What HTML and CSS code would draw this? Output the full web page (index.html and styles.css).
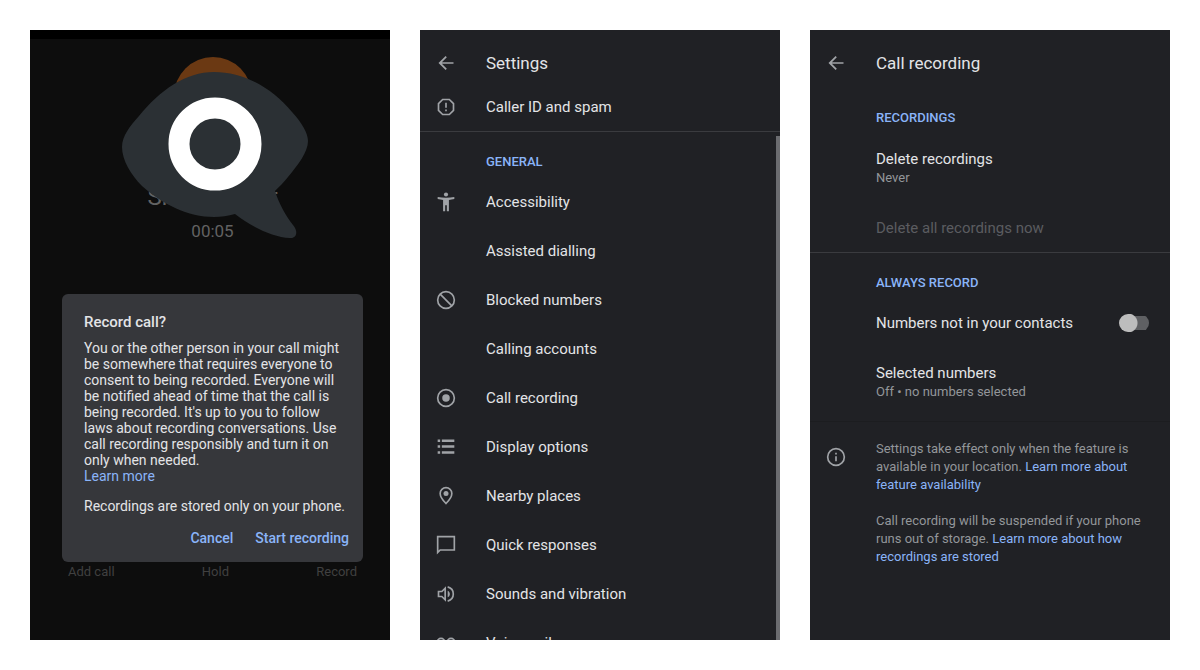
FILE: index.html
```html
<!DOCTYPE html>
<html lang="en">
<head>
  <meta charset="UTF-8">
  <meta name="viewport" content="width=device-width, initial-scale=1.0">
  <title>Call recording</title>
  <link rel="stylesheet" href="styles.css">
</head>
<body>
  <main class="screens">

    <!-- In-call screen with the consent dialog -->
    <section class="screen call">
      <div class="avatar"></div>
      <p class="caller">Sheila Miller</p>
      <p class="timer">00:05</p>
      <svg class="logo" viewBox="0 0 186 170" aria-hidden="true">
        <path fill="#2b3034" d="M0 77C0 66 8 56 17 46C38 20 64 2 92 2C122 2 150 18 170 42C180 53 186 63 186 71C186 82 176 95 166 107C162 112 157 117 153 121C157 134 164 146 171 155C177 162 174 169 168 168C150 167 130 157 113 144C106 146 99 147 92 147C66 147 40 134 20 116C9 105 0 90 0 77Z"/>
        <circle cx="93" cy="74" r="36" fill="#2b3034" stroke="#fff" stroke-width="21"/>
      </svg>
      <div class="dialog" role="dialog" aria-labelledby="dialog-title">
        <h2 id="dialog-title">Record call?</h2>
        <p>You or the other person in your call might be somewhere that requires everyone to consent to being recorded. Everyone will be notified ahead of time that the call is being recorded. It's up to you to follow laws about recording conversations. Use call recording responsibly and turn it on only when needed.</p>
        <a href="#">Learn more</a>
        <p class="stored">Recordings are stored only on your phone.</p>
        <div class="actions">
          <button type="button">Cancel</button>
          <button type="button">Start recording</button>
        </div>
      </div>
      <div class="call-buttons">
        <button type="button">Add call</button>
        <button type="button">Hold</button>
        <button type="button">Record</button>
      </div>
    </section>

    <!-- Settings list -->
    <section class="screen">
      <header class="app-bar">
        <button type="button" class="back" aria-label="Back">
          <svg class="icon" viewBox="0 0 24 24"><path d="M21 11H7l6-6-1.500-1.500L3 12l8.500 8.500L13 19l-6-6h14z"/></svg>
        </button>
        <h1>Settings</h1>
      </header>
      <a class="row" href="#">
        <svg class="icon line" viewBox="0 0 24 24"><path d="M8 3h8l5 5v8l-5 5H8l-5-5V8zM12 7v6M12 15v2"/></svg>
        Caller ID and spam
      </a>
      <div class="list">
        <h2 class="heading">General</h2>
        <a class="row" href="#">
          <svg class="icon" viewBox="0 0 24 24"><circle cx="12" cy="3" r="2.5"/><path d="M22 6v2.5c-2.500.5-4.500.8-6.500 1V23H13v-7h-2v7H8.500V9.500c-2-.2-4-.5-6.500-1V6c6 1.300 14 1.300 20 0z"/></svg>
          Accessibility
        </a>
        <a class="row" href="#"><span class="icon"></span>Assisted dialling</a>
        <a class="row" href="#">
          <svg class="icon line" viewBox="0 0 24 24"><circle cx="12" cy="12" r="10"/><path d="M5 5l14 14"/></svg>
          Blocked numbers
        </a>
        <a class="row" href="#"><span class="icon"></span>Calling accounts</a>
        <a class="row" href="#">
          <svg class="icon line" viewBox="0 0 24 24"><circle cx="12" cy="12" r="10"/><circle class="dot" cx="12" cy="12" r="4.5"/></svg>
          Call recording
        </a>
        <a class="row" href="#">
          <svg class="icon" viewBox="0 0 24 24"><path d="M2 3h3v3H2zM7 3h15v3H7zM2 10h3v3H2zM7 10h15v3H7zM2 17h3v3H2zM7 17h15v3H7z"/></svg>
          Display options
        </a>
        <a class="row" href="#">
          <svg class="icon line" viewBox="0 0 24 24"><path d="M12 2a7 7 0 0 0-7 7c0 5 7 12 7 12s7-7 7-12a7 7 0 0 0-7-7z"/><circle class="dot" cx="12" cy="9" r="3"/></svg>
          Nearby places
        </a>
        <a class="row" href="#">
          <svg class="icon line" viewBox="0 0 24 24"><path d="M2 2h20v16H5l-3 3z"/></svg>
          Quick responses
        </a>
        <a class="row" href="#">
          <svg class="icon line" viewBox="0 0 24 24"><path d="M3 9h4l4-4v14l-4-4H3zM14 3.500c9 2.500 9 14.500 0 17"/><path class="dot" d="M14 8c3.500 1.500 3.500 6.500 0 8z"/></svg>
          Sounds and vibration
        </a>
        <a class="row" href="#">
          <svg class="icon line" viewBox="0 0 24 24"><circle cx="6" cy="11" r="4.5"/><circle cx="18" cy="11" r="4.5"/><path d="M6 15.500h12"/></svg>
          Voicemail
        </a>
      </div>
    </section>

    <!-- Call recording settings -->
    <section class="screen">
      <header class="app-bar">
        <button type="button" class="back" aria-label="Back">
          <svg class="icon" viewBox="0 0 24 24"><path d="M21 11H7l6-6-1.500-1.500L3 12l8.500 8.500L13 19l-6-6h14z"/></svg>
        </button>
        <h1>Call recording</h1>
      </header>
      <div class="group first">
        <h2 class="heading">Recordings</h2>
        <a class="row two-line" href="#">Delete recordings<small>Never</small></a>
        <button type="button" class="row" disabled>Delete all recordings now</button>
      </div>
      <div class="group">
        <h2 class="heading">Always record</h2>
        <label class="row">
          Numbers not in your contacts
          <input type="checkbox" role="switch" class="switch">
        </label>
        <a class="row two-line" href="#">Selected numbers<small>Off • no numbers selected</small></a>
      </div>
      <footer class="info">
        <svg class="icon line" viewBox="0 0 24 24"><circle cx="12" cy="12" r="10"/><path d="M12 11v6M12 7v2"/></svg>
        <div>
          <p>Settings take effect only when the feature is available in your location. <a href="#">Learn more about feature availability</a></p>
          <p>Call recording will be suspended if your phone runs out of storage. <a href="#">Learn more about how recordings are stored</a></p>
        </div>
      </footer>
    </section>

  </main>
</body>
</html>
```
FILE: styles.css
```css
* {
  box-sizing: border-box;
}
body {
  margin: 0;
  padding: 30px;
  background: #fff;
  font-family: Roboto, "Liberation Sans", sans-serif;
}
h1, h2, p {
  margin: 0;
  font-weight: 400;
}
a {
  color: #8ab4f8;
  text-decoration: none;
}
button {
  padding: 0;
  border: 0;
  background: none;
  font: inherit;
  cursor: pointer;
}
.screens {
  display: grid;
  grid-template-columns: repeat(3, 1fr);
  gap: 30px;
  height: calc(100vh - 60px);
}
.screen {
  display: flex;
  flex-direction: column;
  overflow: hidden;
  background: #202125;
  color: #e3e4e7;
}

/* in-call screen */
.call {
  position: relative;
  align-items: center;
  padding: 18px 27px 0 32px;
  border-top: 9px solid #000;
  background: #0d0d0d;
}
.avatar {
  flex: none;
  width: 78px;
  height: 78px;
  border-radius: 50%;
  background: #6b3913;
}
.caller {
  margin-top: 46px;
  color: #626262;
  font-size: 24px;
  line-height: 32px;
}
.timer {
  margin-top: 8px;
  color: #626262;
  font-size: 17px;
  line-height: 20px;
}
.logo {
  position: absolute;
  top: 31px;
  left: 50%;
  width: 186px;
  margin-left: -88px;
}
.dialog {
  width: 100%;
  margin-top: 53px;
  padding: 18px 14px 14px 22px;
  border-radius: 6px;
  background: #36373b;
  font-size: 14px;
  line-height: 16px;
}
.dialog h2 {
  margin-bottom: 8px;
  font-size: 15px;
  font-weight: 500;
  line-height: 20px;
}
.dialog .stored {
  margin-top: 14px;
}
.actions {
  display: flex;
  justify-content: flex-end;
  gap: 22px;
  margin-top: 14px;
}
.actions button {
  color: #8ab4f8;
  font-size: 14px;
  font-weight: 500;
  line-height: 20px;
}
.call-buttons {
  display: flex;
  justify-content: space-between;
  width: 100%;
  padding: 0 6px;
}
.call-buttons button {
  color: #404040;
  font-size: 13px;
  line-height: 20px;
}

/* settings */
.app-bar {
  display: flex;
  flex: none;
  align-items: center;
  gap: 30px;
  height: 52px;
  padding: 14px 16px 0;
}
.app-bar h1 {
  font-size: 17px;
  line-height: 24px;
}
.back {
  display: flex;
}
.icon {
  flex: none;
  width: 20px;
  height: 20px;
  fill: #a0a3a7;
}
.line {
  fill: none;
  stroke: #a0a3a7;
  stroke-width: 2;
}
.dot {
  fill: #a0a3a7;
  stroke: none;
}
.row {
  display: flex;
  flex: none;
  align-items: center;
  gap: 30px;
  width: 100%;
  height: 49px;
  padding: 0 16px;
  color: #e3e4e7;
  font-size: 15px;
  line-height: 20px;
}
.list {
  flex: 1;
  overflow: hidden;
  border-top: 1px solid #3a3b3f;
  background: linear-gradient(#6b6c70, #6b6c70) right 4px / 4px 100% no-repeat;
}
.heading {
  padding: 21px 16px 6px 66px;
  color: #8ab4f8;
  font-size: 13px;
  font-weight: 500;
  line-height: 18px;
  text-transform: uppercase;
}
.group {
  border-top: 1px solid #3a3b3f;
}
.first {
  margin-top: 5px;
  border-color: transparent;
}
.group .row {
  justify-content: space-between;
  padding: 0 21px 0 66px;
}
.group .two-line {
  flex-direction: column;
  align-items: flex-start;
  justify-content: center;
  gap: 0;
  height: 70px;
}
.two-line small {
  color: #93969a;
  font-size: 13px;
  line-height: 18px;
}
.row:disabled {
  color: #5b5c60;
}
.switch {
  appearance: none;
  width: 30px;
  height: 18px;
  margin: 0;
  background:
    radial-gradient(circle at 9px 9px, #bdbdbd 9px, transparent 10px),
    linear-gradient(#5f6063, #5f6063) center / 30px 14px no-repeat;
  border-radius: 9px;
}
.switch:checked {
  transform: scaleX(-1);
}
.info {
  display: flex;
  gap: 30px;
  margin-top: 4px;
  padding: 18px 20px 18px 16px;
  border-top: 1px solid #1c1d20;
  color: #93969a;
  font-size: 13px;
  line-height: 18px;
}
.info .icon {
  margin-top: 7px;
}
.info p + p {
  margin-top: 18px;
}
```
